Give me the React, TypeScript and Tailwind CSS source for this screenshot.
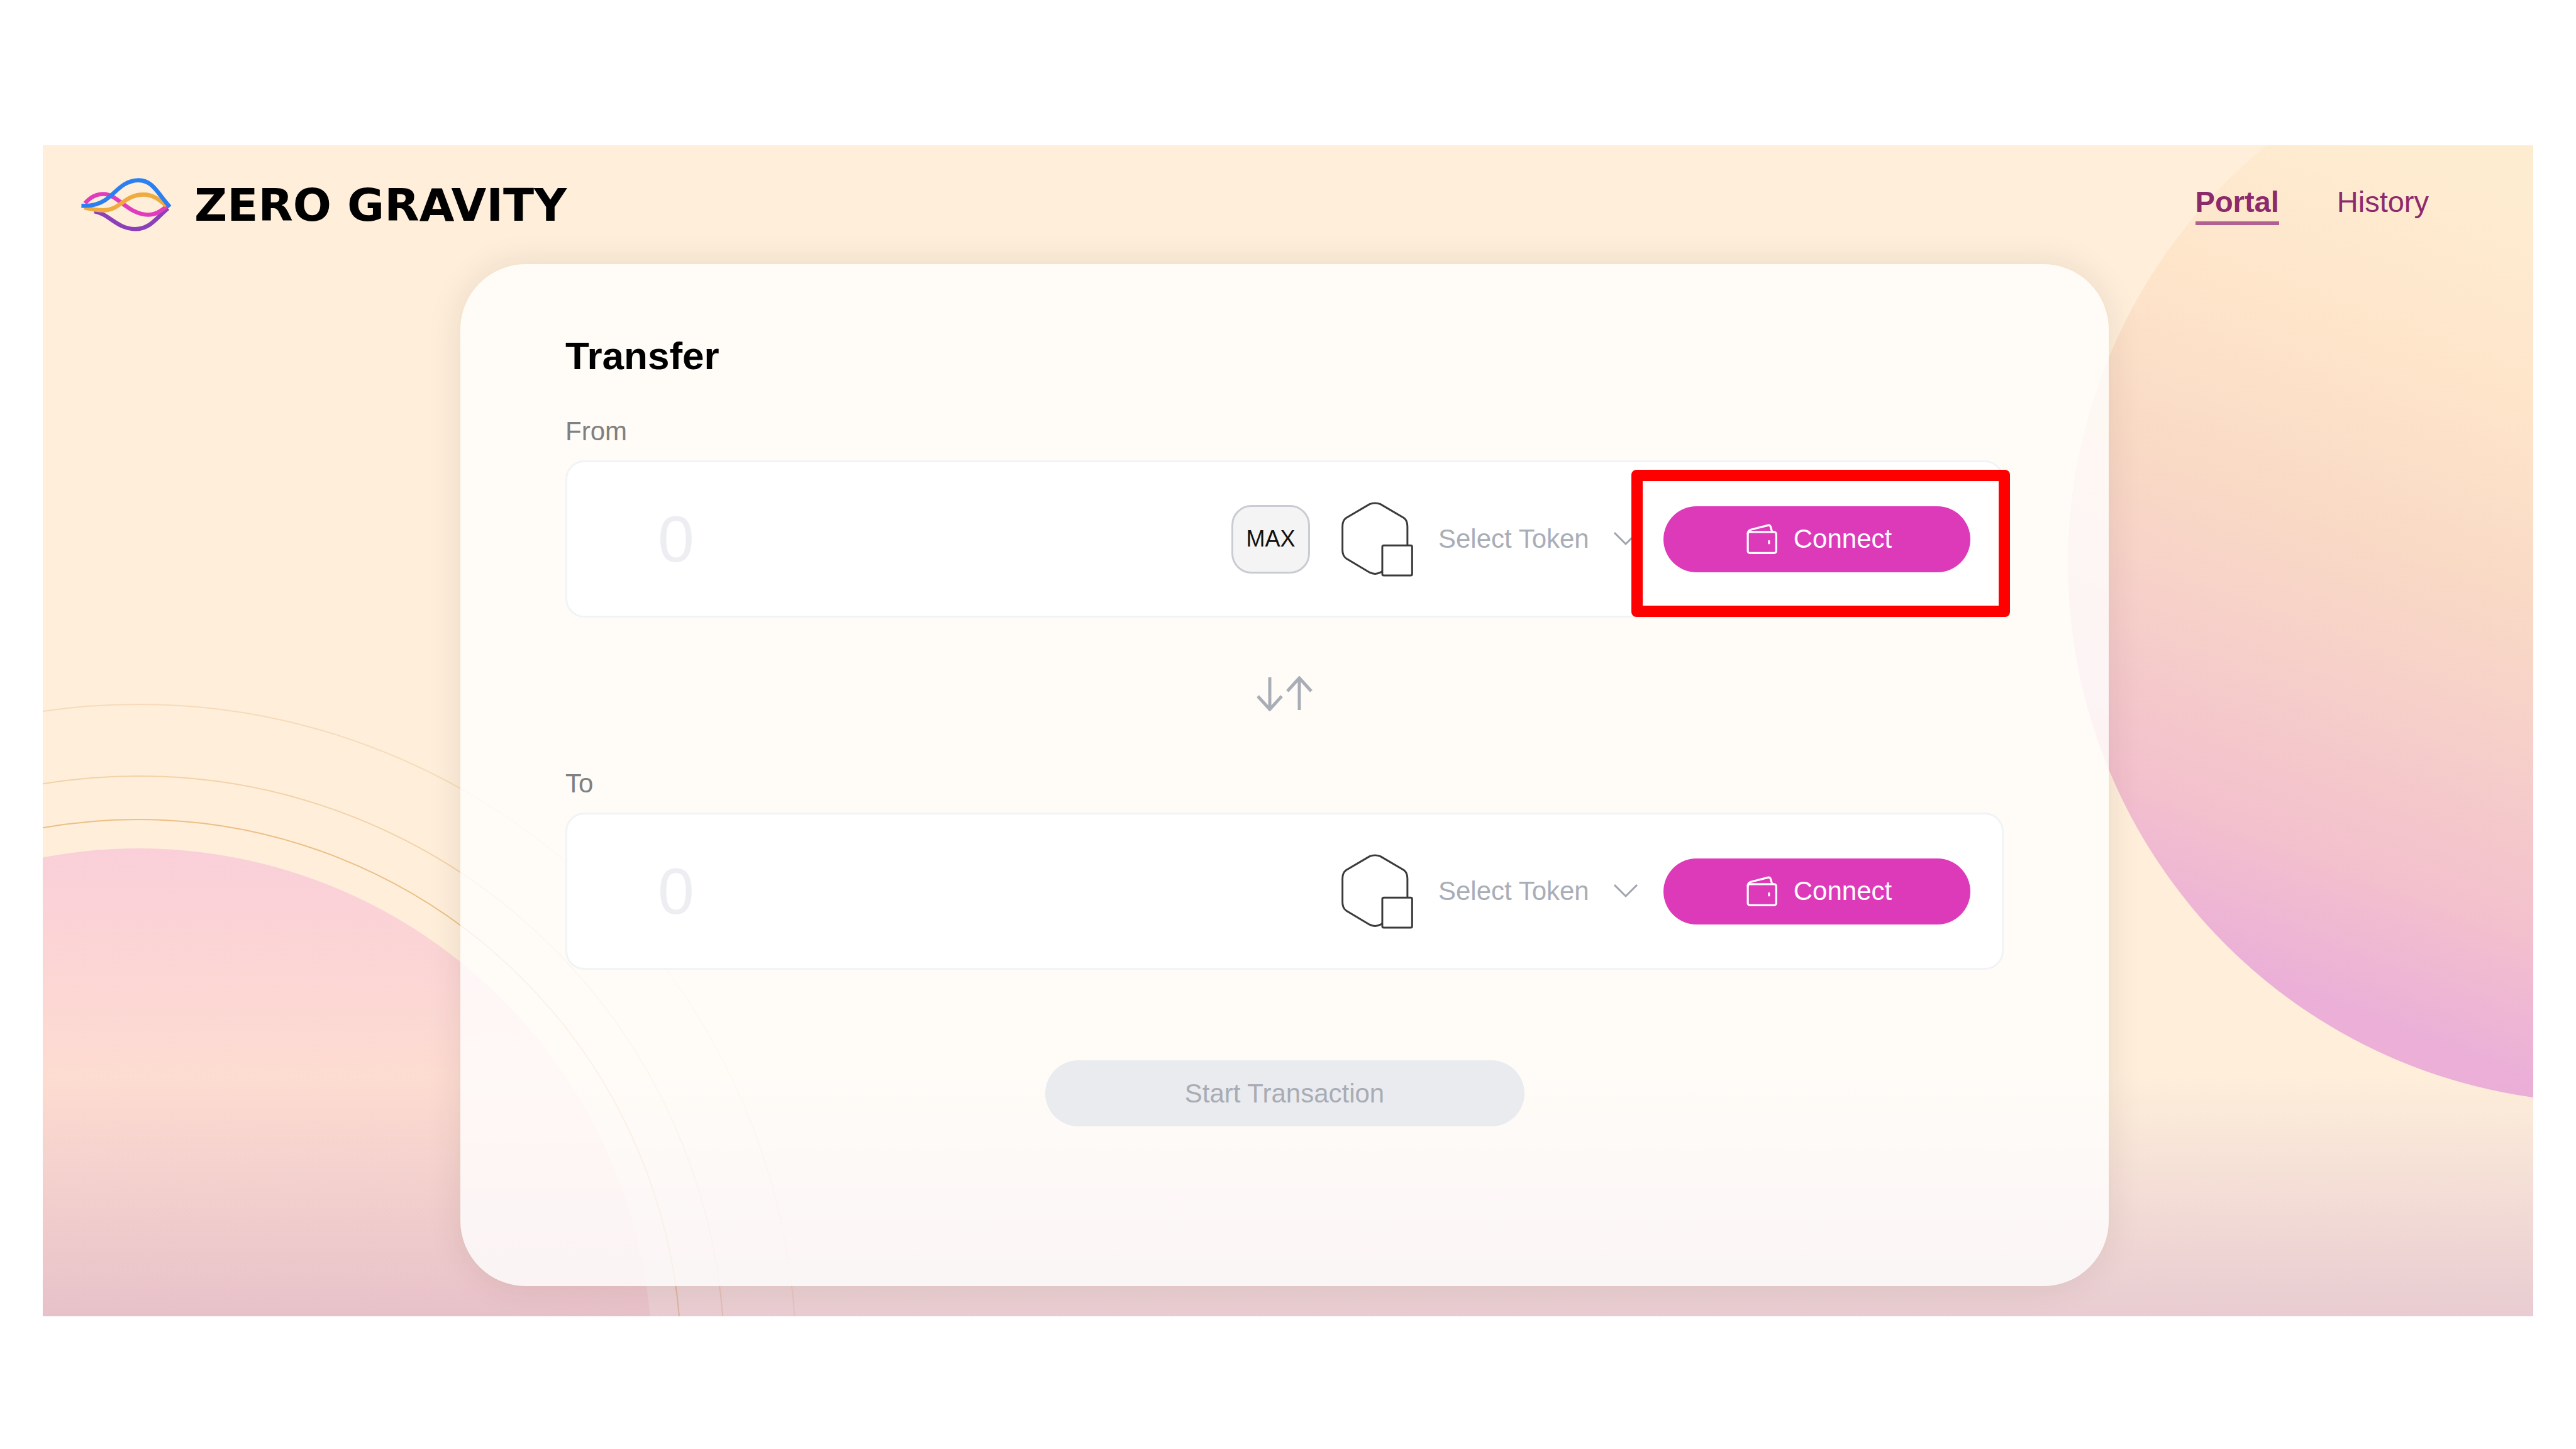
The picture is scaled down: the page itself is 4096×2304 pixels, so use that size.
import React from "react";

function Backdrop() {
  return (
    <svg
      aria-hidden="true"
      className="absolute inset-0 h-full w-full"
      viewBox="0 0 3960 1864"
      preserveAspectRatio="xMidYMid slice"
      fill="none"
    >
      <defs>
        <linearGradient id="sunset" gradientUnits="userSpaceOnUse" x1="461" y1="-1220" x2="0" y2="0">
          <stop offset="0" stopColor="#feecd1" />
          <stop offset="0.23" stopColor="#fee5ca" />
          <stop offset="0.44" stopColor="#f9dac5" />
          <stop offset="0.61" stopColor="#f6d0c9" />
          <stop offset="0.82" stopColor="#f3c1cd" />
          <stop offset="1" stopColor="#ebafd8" />
        </linearGradient>
        <linearGradient id="dawn" gradientUnits="userSpaceOnUse" x1="0" y1="1118" x2="0" y2="1864">
          <stop offset="0" stopColor="#facfd9" />
          <stop offset="0.5" stopColor="#fddcd1" />
          <stop offset="1" stopColor="#fcdccc" />
        </linearGradient>
        <linearGradient id="dusk" gradientUnits="userSpaceOnUse" x1="0" y1="1480" x2="0" y2="1864">
          <stop offset="0" stopColor="#c99bc5" stopOpacity="0" />
          <stop offset="1" stopColor="#c99bc5" stopOpacity="0.41" />
        </linearGradient>
      </defs>
      <circle cx="4077" cy="666" r="857" fill="url(#sunset)" />
      <circle cx="152" cy="1936" r="817" fill="url(#dawn)" />
      <g stroke="#e2ab63" strokeWidth="2">
        <circle cx="152" cy="1936" r="863" strokeOpacity="0.7" />
        <circle cx="152" cy="1936" r="932" strokeOpacity="0.42" />
        <circle cx="152" cy="1936" r="1046" strokeOpacity="0.28" />
      </g>
      <rect y="1480" width="3960" height="384" fill="url(#dusk)" />
    </svg>
  );
}

function Logo() {
  return (
    <svg aria-hidden="true" className="h-[91px] w-[146px]" viewBox="50 60 640 400" fill="none" strokeWidth="29">
      <path stroke="#8b3fb8" d="M150 306C250 322 310 430 435 430C540 430 580 355 665 285" />
      <path stroke="#e03cbd" d="M85 250C120 208 160 185 215 185C310 185 390 330 525 330C590 330 620 298 660 268" />
      <path stroke="#f0ab40" d="M80 280C140 294 180 299 215 299C330 299 360 189 495 189C560 189 605 225 655 268" />
      <path stroke="#2b7ff0" d="M60 267C130 271 180 258 225 228C300 178 350 89 460 89C560 89 595 185 678 275" />
    </svg>
  );
}

function TokenIcon() {
  return (
    <svg aria-hidden="true" className="h-[123px] w-[118px] shrink-0" viewBox="240 110 520 540" fill="none" stroke="#3a3a3a" strokeWidth="13">
      <path d="M256 290Q256 248 282 230L446 134Q484 118 522 134L686 230Q711 248 711 290V455Q711 492 686 508L522 612Q484 632 446 612L282 514Q256 496 256 455Z" />
      <rect x="535" y="423" width="209" height="210" rx="10" fill="white" />
    </svg>
  );
}

function WalletIcon() {
  return (
    <svg aria-hidden="true" className="h-[62px] w-[62px]" viewBox="113 146 272 272" fill="none" stroke="white" strokeWidth="14" strokeLinejoin="round" strokeLinecap="round">
      <rect x="153" y="233" width="198" height="147" rx="14" />
      <path d="M153 247Q152 224 174 217L293 187Q308 184 312 197L322 230" />
      <path d="M301 297V312" />
    </svg>
  );
}

function ConnectButton() {
  return (
    <button
      type="button"
      className="flex h-[105px] w-[488px] items-center justify-center gap-5 rounded-full bg-[#dd3ab9] text-[42px] leading-[48px] text-white"
    >
      <WalletIcon />
      Connect
    </button>
  );
}

type TransferRowProps = {
  id: string;
  label: string;
  withMax?: boolean;
  highlighted?: boolean;
};

function TransferRow({ id, label, withMax, highlighted }: TransferRowProps) {
  return (
    <div className="flex flex-col">
      <label htmlFor={id} className="text-[42px] leading-[48px] text-[#808080]">
        {label}
      </label>
      <div className="mt-[22px] flex h-[250px] items-center rounded-[30px] border-[3px] border-[#f2f3f6] bg-white pr-[50px] pl-36">
        <input
          id={id}
          type="text"
          inputMode="decimal"
          placeholder="0"
          className="min-w-0 flex-1 bg-transparent text-[104px] leading-[120px] text-gray-800 outline-none placeholder:text-[#edeef2]"
        />
        {withMax && (
          <button
            type="button"
            className="mr-12 h-[109px] w-[125px] rounded-[32px] border-[3px] border-[#c9ccd2] bg-[#f4f4f4] text-[36px] leading-[42px] text-[#111111]"
          >
            MAX
          </button>
        )}
        <div className="flex items-center">
          <TokenIcon />
          <select
            aria-label={`${label} token`}
            className="ml-[38px] w-[240px] appearance-none bg-transparent text-[42px] leading-[48px] text-[#a9adb7] outline-none"
          >
            <option>Select Token</option>
          </select>
          <svg aria-hidden="true" className="ml-[38px] h-6 w-10" viewBox="0 0 40 24" fill="none" stroke="#a0a4ad" strokeWidth="3">
            <path d="M2 2L20 20L38 2" />
          </svg>
        </div>
        <div className="relative ml-10">
          <ConnectButton />
          {highlighted && (
            <div className="pointer-events-none absolute -top-[58px] -right-[63px] -bottom-[71px] -left-[51px] rounded-lg border-[18px] border-[#ff0000]" />
          )}
        </div>
      </div>
    </div>
  );
}

export default function App() {
  return (
    <div className="min-h-screen bg-white px-[68px] pt-[231px] pb-[208px] font-['Liberation_Sans',Arial,sans-serif]">
      <div className="relative overflow-hidden bg-[#feeeda]">
        <Backdrop />
        <header className="relative flex items-center justify-between py-[49px] pr-[166px] pl-[59px]">
          <a href="#" className="flex items-center gap-9">
            <Logo />
            <span className="font-['DejaVu_Sans',sans-serif] text-[72px] leading-[80px] font-bold text-black">
              ZERO GRAVITY
            </span>
          </a>
          <nav className="flex gap-[92px] text-[47px] leading-[54px] text-[#8c2a6c]">
            <a href="#portal" className="border-b-[6px] border-[#b0618f] pb-1 font-bold">
              Portal
            </a>
            <a href="#history">History</a>
          </nav>
        </header>
        <main className="relative pr-[11px] pb-12">
          <section className="mx-auto flex w-full max-w-[2621px] flex-col rounded-[104px] bg-white/80 px-[167px] pt-[111px] pb-[254px] shadow-[0_0_54px_rgba(60,30,0,0.1)]">
            <h1 className="mb-[61px] text-[62px] leading-[70px] font-bold text-black">Transfer</h1>
            <TransferRow id="from-amount" label="From" withMax highlighted />
            <button type="button" aria-label="Swap direction" className="mt-[93px] mb-[91px] self-center">
              <svg aria-hidden="true" className="h-14 w-[90px]" viewBox="0 0 90 56" fill="none" stroke="#a9adb6" strokeWidth="5">
                <path d="M21 2V53M2 32L21 53L40 32" />
                <path d="M68 54V3M49 24L68 3L87 24" />
              </svg>
            </button>
            <TransferRow id="to-amount" label="To" />
            <button
              type="button"
              className="mt-36 h-[105px] w-[762px] self-center rounded-full bg-[#e9ebef] text-[42px] leading-[48px] text-[#a9acb4]"
            >
              Start Transaction
            </button>
          </section>
        </main>
      </div>
    </div>
  );
}
